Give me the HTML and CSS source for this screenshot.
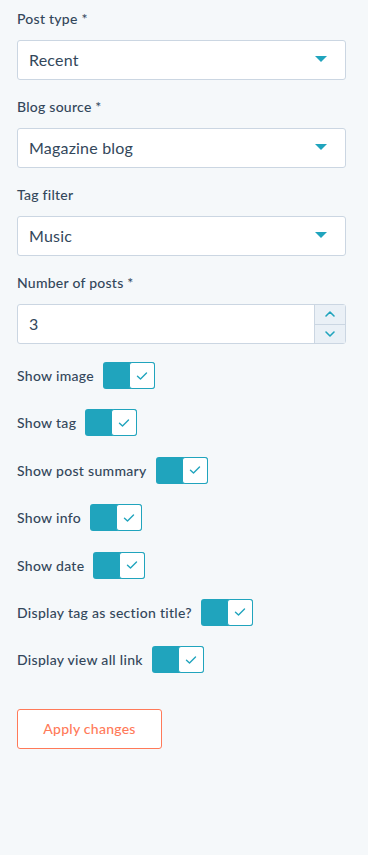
FILE: index.html
```html
<!DOCTYPE html>
<html>
<head>
    <title>Post listing settings</title>
    <meta name="viewport" content="width=device-width, initial-scale=1">
    <link rel="stylesheet" href="styles.css">
</head>
<body>
    <div class="panel">
        <div class="field">
            <label class="label">Post type *</label>
            <div class="select"><span>Recent</span><span class="caret"></span></div>
        </div>
        <div class="field">
            <label class="label">Blog source *</label>
            <div class="select"><span>Magazine blog</span><span class="caret"></span></div>
        </div>
        <div class="field">
            <label class="label">Tag filter</label>
            <div class="select"><span>Music</span><span class="caret"></span></div>
        </div>
        <div class="field">
            <label class="label">Number of posts *</label>
            <div class="number">
                <span class="number-value">3</span>
                <div class="spinner">
                    <button class="spin">
                        <svg width="12" height="8" viewBox="0 0 12 8"><path d="M2 6 L6 2 L10 6" fill="none" stroke="#20a4bd" stroke-width="1.6" stroke-linecap="round" stroke-linejoin="round"/></svg>
                    </button>
                    <button class="spin">
                        <svg width="12" height="8" viewBox="0 0 12 8"><path d="M2 2 L6 6 L10 2" fill="none" stroke="#20a4bd" stroke-width="1.6" stroke-linecap="round" stroke-linejoin="round"/></svg>
                    </button>
                </div>
            </div>
        </div>

        <div class="toggles">
            <div class="toggle-row"><span>Show image</span><span class="toggle"><span class="knob"></span></span></div>
            <div class="toggle-row"><span>Show tag</span><span class="toggle"><span class="knob"></span></span></div>
            <div class="toggle-row"><span>Show post summary</span><span class="toggle"><span class="knob"></span></span></div>
            <div class="toggle-row"><span>Show info</span><span class="toggle"><span class="knob"></span></span></div>
            <div class="toggle-row"><span>Show date</span><span class="toggle"><span class="knob"></span></span></div>
            <div class="toggle-row"><span>Display tag as section title?</span><span class="toggle"><span class="knob"></span></span></div>
            <div class="toggle-row"><span>Display view all link</span><span class="toggle"><span class="knob"></span></span></div>
        </div>

        <button class="apply">Apply changes</button>
    </div>

    <script>
        // draw the checkmark in every toggle knob
        document.querySelectorAll('.knob').forEach(knob => {
            knob.innerHTML = '<svg width="12" height="10" viewBox="0 0 12 10"><path d="M1.5 5.2 L4.5 8 L10.5 2" fill="none" stroke="#20a4bd" stroke-width="1.4" stroke-linecap="round" stroke-linejoin="round"/></svg>';
        });
    </script>
</body>
</html>
```

FILE: styles.css
```css
body {
    margin: 0;
    background-color: #f5f8fa;
    font-family: Lato, "Open Sans", sans-serif;
    color: #33475b;
}
.panel {
    padding: 10px 22px 0 17px;
    height: 845px;
}
.field {
    margin-bottom: 18px;
}
.label {
    display: block;
    font-size: 14px;
    font-weight: 500;
    letter-spacing: 0.25px;
    line-height: 18px;
    margin-bottom: 12px;
}
.select {
    background: #fff;
    border: 1px solid #cbd6e2;
    border-radius: 3px;
    display: flex;
    align-items: center;
    justify-content: space-between;
    padding: 0 18px 2px 11px;
    height: 36px;
    font-size: 16px;
    letter-spacing: 0.2px;
}
.caret {
    width: 0;
    height: 0;
    border-left: 6px solid transparent;
    border-right: 6px solid transparent;
    border-top: 6px solid #20a4bd;
}
.number {
    height: 38px;
    background: #fff;
    border: 1px solid #cbd6e2;
    border-radius: 3px;
    display: flex;
    font-size: 16px;
}
.number-value {
    flex: 1;
    display: flex;
    align-items: center;
    padding-left: 11px;
    padding-bottom: 2px;
}
.spinner {
    width: 30px;
    display: flex;
    flex-direction: column;
    border-left: 1px solid #cbd6e2;
}
.spin {
    flex: 1;
    border: none;
    background: #eaf0f6;
    padding: 0;
    display: flex;
    align-items: center;
    justify-content: center;
}
.spin + .spin {
    border-top: 1px solid #cbd6e2;
}
.toggle-row {
    display: flex;
    align-items: center;
    gap: 9px;
    height: 27px;
    margin-bottom: 20.4px;
    font-size: 14px;
    font-weight: 500;
    letter-spacing: 0.3px;
}
.toggle {
    width: 52px;
    height: 27px;
    background: #20a4bd;
    border-radius: 3px;
    display: flex;
    justify-content: flex-end;
}
.knob {
    width: 24px;
    height: 25px;
    background: #fff;
    border: 1px solid #20a4bd;
    border-radius: 3px;
    display: flex;
    align-items: center;
    justify-content: center;
}
.apply {
    margin-top: 15px;
    width: 145px;
    height: 40px;
    background: #fff;
    border: 1px solid #ff7a59;
    border-radius: 3px;
    color: #ff7a59;
    font-family: Lato, "Open Sans", sans-serif;
    font-size: 14px;
    font-weight: 500;
    letter-spacing: 0.25px;
}
```
